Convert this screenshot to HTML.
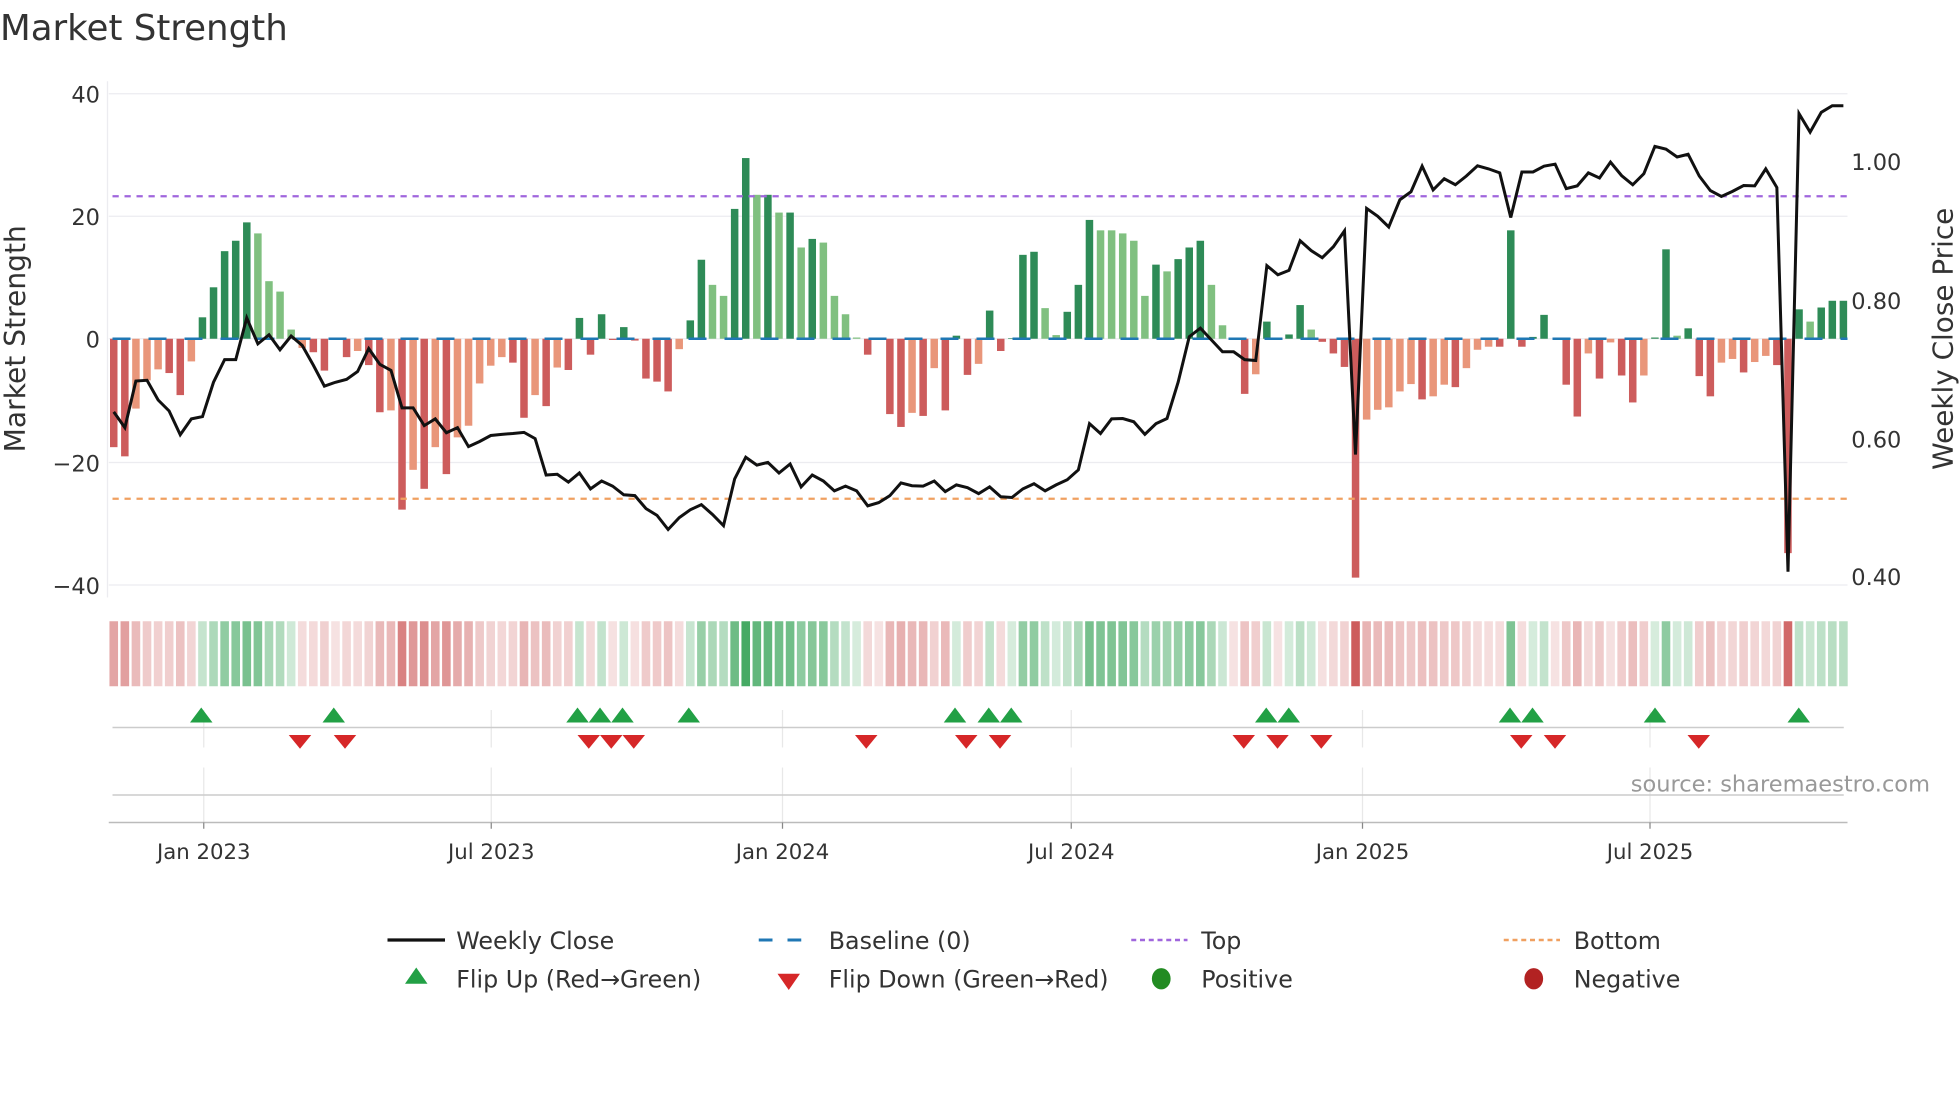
<!DOCTYPE html>
<html><head><meta charset="utf-8"><style>
html,body{margin:0;padding:0;background:#fff;width:1960px;height:1102px;overflow:hidden}
svg{display:block}
text{font-family:"DejaVu Sans","Liberation Sans",sans-serif;fill:#333}
</style></head><body>
<svg id="s" width="1960" height="1102" viewBox="0 0 1568 881.6" xmlns="http://www.w3.org/2000/svg">
<text x="0" y="32" font-size="28.5">Market Strength</text>
<g stroke="#ececf0" stroke-width="1">
<line x1="87" y1="75" x2="1478" y2="75"/><line x1="87" y1="173" x2="1478" y2="173"/>
<line x1="87" y1="271" x2="1478" y2="271"/><line x1="87" y1="370" x2="1478" y2="370"/>
<line x1="87" y1="468" x2="1478" y2="468"/><line x1="86" y1="65" x2="86" y2="478"/>
</g>
<g font-size="18" text-anchor="end">
<text x="80" y="82">40</text><text x="80" y="180">20</text><text x="80" y="278">0</text>
<text x="80" y="377">−20</text><text x="80" y="475">−40</text>
</g>
<g font-size="18">
<text x="1481" y="136">1.00</text><text x="1481" y="247">0.80</text>
<text x="1481" y="358">0.60</text><text x="1481" y="468">0.40</text>
</g>
<text font-size="22.5" text-anchor="middle" transform="translate(20,271) rotate(-90)">Market Strength</text>
<text font-size="22.3" text-anchor="middle" transform="translate(1562,271) rotate(-90)">Weekly Close Price</text>
<g id="bars"></g>
<line x1="90" y1="271" x2="1478" y2="271" stroke="#1f77b4" stroke-width="2" stroke-dasharray="14.4,14.4"/>
<line x1="90" y1="157" x2="1478" y2="157" stroke="#a066dd" stroke-width="1.8" stroke-dasharray="5,4.6"/>
<line x1="90" y1="399" x2="1478" y2="399" stroke="#f0a060" stroke-width="1.8" stroke-dasharray="5,4.6"/>
<polyline id="price" fill="none" stroke="#111" stroke-width="2.4" stroke-linejoin="miter"/>
<g id="strip"></g>
<g stroke="#e8e8e8" stroke-width="1">
<line x1="163" y1="568" x2="163" y2="598"/><line x1="393" y1="568" x2="393" y2="598"/>
<line x1="626" y1="568" x2="626" y2="598"/><line x1="857" y1="568" x2="857" y2="598"/>
<line x1="1090" y1="568" x2="1090" y2="598"/><line x1="1320" y1="568" x2="1320" y2="598"/>
<line x1="163" y1="614" x2="163" y2="658"/><line x1="393" y1="614" x2="393" y2="658"/>
<line x1="626" y1="614" x2="626" y2="658"/><line x1="857" y1="614" x2="857" y2="658"/>
<line x1="1090" y1="614" x2="1090" y2="658"/><line x1="1320" y1="614" x2="1320" y2="658"/>
</g>
<line x1="90" y1="582" x2="1475" y2="582" stroke="#ccc" stroke-width="1.2"/>
<line x1="90" y1="636" x2="1475" y2="636" stroke="#ccc" stroke-width="1.2"/>
<line x1="87" y1="658" x2="1478" y2="658" stroke="#bbb" stroke-width="1.2"/>
<g id="marks"></g>
<text x="1544" y="633" font-size="18" text-anchor="end" style="fill:#999">source: sharemaestro.com</text>
<g stroke="#888" stroke-width="1">
<line x1="163" y1="658" x2="163" y2="663"/><line x1="393" y1="658" x2="393" y2="663"/>
<line x1="626" y1="658" x2="626" y2="663"/><line x1="857" y1="658" x2="857" y2="663"/>
<line x1="1090" y1="658" x2="1090" y2="663"/><line x1="1320" y1="658" x2="1320" y2="663"/>
</g>
<g font-size="17" text-anchor="middle">
<text x="163" y="687">Jan 2023</text><text x="393" y="687">Jul 2023</text>
<text x="626" y="687">Jan 2024</text><text x="857" y="687">Jul 2024</text>
<text x="1090" y="687">Jan 2025</text><text x="1320" y="687">Jul 2025</text>
</g>
<g font-size="19">
<line x1="310" y1="752" x2="356" y2="752" stroke="#111" stroke-width="2.6"/>
<text x="365" y="759">Weekly Close</text>
<line x1="607" y1="752" x2="652" y2="752" stroke="#1f77b4" stroke-width="2.4" stroke-dasharray="11,12"/>
<text x="663" y="759">Baseline (0)</text>
<line x1="905" y1="752" x2="950" y2="752" stroke="#a066dd" stroke-width="2" stroke-dasharray="4,3"/>
<text x="961" y="759">Top</text>
<line x1="1203" y1="752" x2="1248" y2="752" stroke="#f0a060" stroke-width="2" stroke-dasharray="4,3"/>
<text x="1259" y="759">Bottom</text>
<polygon points="333,774 324,787 342,787" fill="#22a045"/>
<text x="365" y="790">Flip Up (Red→Green)</text>
<polygon points="622,779 640,779 631,792" fill="#d62728"/>
<text x="663" y="790">Flip Down (Green→Red)</text>
<ellipse cx="929" cy="783" rx="7.5" ry="8.5" fill="#228b22"/>
<text x="961" y="790">Positive</text>
<ellipse cx="1227" cy="783" rx="7.5" ry="8.5" fill="#b22222"/>
<text x="1259" y="790">Negative</text>
</g>
</svg>
<script>
var B="R-17.7 R-19.2 r-11.4 r-6.8 r-5 R-5.6 R-9.2 r-3.7 G3.5 G8.4 G14.3 G16 G19 g17.2 g9.4 g7.7 g1.5 r-1.5 R-2.2 R-5.2 R0 R-3 r-2 R-4.3 R-12 r-11.7 R-27.9 r-21.4 R-24.5 r-17.7 R-22.1 r-16.1 r-14.2 r-7.3 r-4.4 r-3 R-3.9 R-12.9 r-9.2 R-11 r-4.7 R-5.1 G3.4 R-2.6 G4 R-0.2 G1.9 R-0.3 R-6.5 R-7 R-8.6 r-1.7 G3 G12.9 g8.8 g7 G21.2 G29.5 g23.5 G23.5 g20.6 G20.6 g14.9 G16.3 g15.7 g7 g4 g0.2 R-2.6 R0 R-12.3 R-14.4 r-12.1 R-12.6 r-4.8 R-11.7 G0.5 R-5.9 r-4.1 G4.6 R-2 G0.1 G13.7 G14.2 g5 g0.6 G4.4 G8.8 G19.4 g17.7 g17.7 g17.2 g16 g7 G12.1 g11 G13 G14.9 G16 g8.8 g2.2 R0 R-9 r-5.8 G2.8 R0 G0.7 G5.5 g1.5 R-0.5 R-2.4 R-4.6 R-39 r-13.2 r-11.6 r-11.2 r-8.6 r-7.4 R-9.9 r-9.4 r-7.5 R-7.9 r-4.8 r-1.8 r-1.3 R-1.3 G17.7 R-1.3 G0.3 G3.9 R0 R-7.5 R-12.7 r-2.4 R-6.5 r-0.6 R-6 R-10.4 r-6 G0.2 G14.6 g0.5 G1.7 R-6.1 R-9.4 r-3.9 r-3.3 R-5.5 r-3.8 r-2.8 R-4.3 R-35 G4.8 g2.8 G5.1 G6.2 G6.2".split(" ");
var P=[840,880,762,760,810,838,898,858,852,765,708,708,602,668,645,683,648,672,722,775,765,758,738,680,720,735,830,830,875,858,893,880,928,915,900,897,895,892,908,1000,998,1018,995,
1035,1015,1028,1050,1052,1085,1102,1138,1108,1088,1075,1100,1128,1010,955,975,968,995,972,1030,1000,1015,1040,1028,1040,1078,1070,1052,1020,1027,1028,1015,1042,1025,1032,1047,1030,1055,1057,1035,1022,
1040,1025,1012,987,870,895,858,857,865,897,870,857,765,650,628,658,688,688,708,710,470,493,482,407,432,450,422,382,948,325,345,372,303,283,218,278,250,265,243,217,225,235,
348,233,233,218,213,275,268,235,248,208,242,265,237,168,175,195,188,243,280,295,282,267,268,225,272,1245,85,132,82,65,65];
var C={G:"#2e8b57",g:"#80c080",R:"#cd5c5c",r:"#e9967a"};
var NS="http://www.w3.org/2000/svg",bars=document.getElementById("bars"),strip=document.getElementById("strip");
function el(p,n,a){var e=document.createElementNS(NS,n);for(var k in a)e.setAttribute(k,a[k]);p.appendChild(e);return e;}
var pitch=8.87,x0=91,bw=6,pts=[];
for(var i=0;i<B.length;i++){
 var t=B[i][0],v=parseFloat(B[i].slice(1)),cx=x0+i*pitch;
 if(v!=0){var y=271-v*4.9;el(bars,"rect",{x:cx-bw/2,y:Math.min(y,271),width:bw,height:Math.abs(v*4.9),fill:C[t]});}
 var a,col;
 if(v>0){a=Math.min(0.22+0.8*v/30,1);col="rgba(70,170,100,"+a+")";}
 else{a=Math.min(0.18+0.82*Math.abs(v)/39,1);col="rgba(205,92,92,"+a+")";}
 el(strip,"rect",{x:cx-pitch/2+1,y:497,width:pitch-2,height:52,fill:col});
 var py=271-(655-P[i])*0.316;pts.push(cx.toFixed(1)+","+py.toFixed(1));
}
document.getElementById("price").setAttribute("points",pts.join(" "));
var m=document.getElementById("marks");
[161,267,462,480,498,551,764,791,809,1013,1031,1208,1226,1324,1439].forEach(function(x){el(m,"polygon",{points:(x)+",566 "+(x-9)+",578 "+(x+9)+",578",fill:"#22a045"});});
[240,276,471,489,507,693,773,800,995,1022,1057,1217,1244,1359].forEach(function(x){el(m,"polygon",{points:(x-9)+",588 "+(x+9)+",588 "+x+",599",fill:"#d62728"});});
</script>
</body></html>
